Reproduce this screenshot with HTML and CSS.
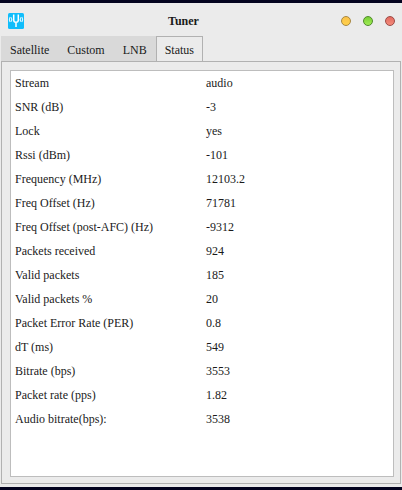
FILE: index.html
```html
<!DOCTYPE html>
<html lang="en">
<head>
  <meta charset="UTF-8" />
  <meta name="viewport" content="width=device-width, initial-scale=1.0"/>
  <title>Tuner</title>
  <link rel="stylesheet" href="styles.css">
</head>
<body>

  <div class="window">
    <header class="titlebar">
      <svg class="app-icon" width="16" height="16" viewBox="0 0 16 16">
        <rect width="16" height="16" rx="1.5" fill="#0fbdfb"/>
        <g fill="none" stroke="#fff">
          <path d="M5.7 1.500V7Q5.700 9.300 8 9.300T10.300 7V1.500M8 9.300V14" stroke-width="1.500"/>
          <path d="M3 4.200Q4.500 6.500 3 8.800M13 4.200Q11.500 6.500 13 8.800" stroke-width="1.100" opacity="0.850"/>
          <path d="M2.200 4Q.6 6.500 2.200 9M13.800 4Q15.400 6.500 13.800 9" stroke-width="1.100" opacity="0.850"/>
        </g>
      </svg>
      <h1>Tuner</h1>
      <div class="controls">
        <span class="dot minimize"></span>
        <span class="dot maximize"></span>
        <span class="dot close"></span>
      </div>
    </header>

    <nav class="tabs">
      <div class="tab">Satellite</div>
      <div class="tab">Custom</div>
      <div class="tab">LNB</div>
      <div class="tab active">Status</div>
    </nav>

    <main class="panel">
      <dl class="status">
        <dt>Stream</dt><dd>audio</dd>
        <dt>SNR (dB)</dt><dd>-3</dd>
        <dt>Lock</dt><dd>yes</dd>
        <dt>Rssi (dBm)</dt><dd>-101</dd>
        <dt>Frequency (MHz)</dt><dd>12103.2</dd>
        <dt>Freq Offset (Hz)</dt><dd>71781</dd>
        <dt>Freq Offset (post-AFC) (Hz)</dt><dd>-9312</dd>
        <dt>Packets received</dt><dd>924</dd>
        <dt>Valid packets</dt><dd>185</dd>
        <dt>Valid packets %</dt><dd>20</dd>
        <dt>Packet Error Rate (PER)</dt><dd>0.8</dd>
        <dt>dT (ms)</dt><dd>549</dd>
        <dt>Bitrate (bps)</dt><dd>3553</dd>
        <dt>Packet rate (pps)</dt><dd>1.82</dd>
        <dt>Audio bitrate(bps):</dt><dd>3538</dd>
      </dl>
    </main>
  </div>

</body>
</html>
```

FILE: styles.css
```css
* {
  box-sizing: border-box;
}

body {
  font-family: "Liberation Serif", serif;
  font-size: 12px;
  color: #1a1a1a;
  background: #03031f;
  height: 490px;
  margin: 0;
  padding: 3px 0;
  overflow: hidden;
}

.window {
  display: flex;
  flex-direction: column;
  height: 484px;
  padding: 0 1px 3px;
  background: #ebebeb;
}

.titlebar {
  display: grid;
  grid-template-columns: 60px 1fr 60px;
  align-items: center;
  height: 33px;
  padding: 3px 6px 0 7px;
}

.app-icon {
  display: block;
}

h1 {
  margin: 0 36px 0 0;
  font-size: 12px;
  text-align: center;
}

.controls {
  display: flex;
  justify-content: flex-end;
  gap: 12px;
}

.dot {
  width: 10px;
  height: 10px;
  border: 1px solid;
  border-radius: 50%;
}

.minimize {
  background: linear-gradient(#fbc24a, #ffd04a);
  border-color: #a8873f;
}

.maximize {
  background: linear-gradient(#79cf36, #a0ec55);
  border-color: #4f8a2b;
}

.close {
  background: linear-gradient(#e26a60, #f48b7b);
  border-color: #9c4a45;
}

.tabs {
  display: flex;
  height: 26px;
  margin-bottom: -1px;
}

.tab {
  padding: 0 9px;
  line-height: 28px;
  background: #d9d9d9;
}

.tab.active {
  padding: 0 8px;
  line-height: 26px;
  background: #ebebeb;
  border: 1px solid #b1b1b1;
}

.panel {
  flex: 1;
  padding: 8px 6px 6px 8px;
  border: 1px solid #b1b1b1;
}

.status {
  display: grid;
  grid-template-columns: 191px 1fr;
  grid-auto-rows: 24px;
  align-content: start;
  height: 100%;
  margin: 0;
  padding: 0 4px;
  line-height: 24px;
  background: #fff;
  border: 1px solid #bdbdbd;
}

dd {
  margin: 0;
}
```
